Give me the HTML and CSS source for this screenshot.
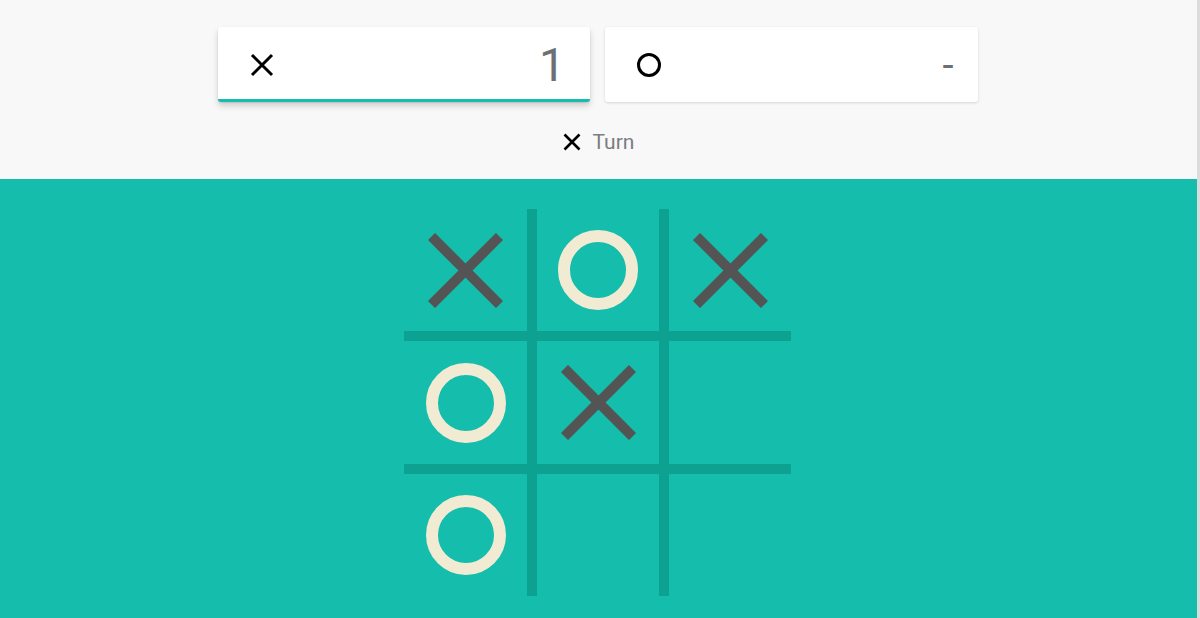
FILE: index.html
```html
<!DOCTYPE html>
<html lang="en">
<head>
<meta charset="utf-8">
<title>Tic Tac Toe</title>
<link rel="stylesheet" href="styles.css">
</head>
<body>
<div class="page">
  <header class="scoreboard">
    <div class="players">
      <div class="player player-active">
        <svg class="mark-icon" viewBox="0 0 24 24" width="24" height="24">
          <path d="M2 2 L22 22 M22 2 L2 22" stroke="#000" stroke-width="3" fill="none"/>
        </svg>
        <span class="score">1</span>
      </div>
      <div class="player">
        <svg class="mark-icon" viewBox="0 0 24 24" width="24" height="24">
          <circle cx="12" cy="12" r="10.5" stroke="#000" stroke-width="3" fill="none"/>
        </svg>
        <span class="score score-empty">-</span>
      </div>
    </div>
    <div class="turn">
      <svg class="turn-icon" viewBox="0 0 18 18" width="18" height="18">
        <path d="M1.5 1.5 L16.5 16.5 M16.5 1.5 L1.5 16.5" stroke="#000" stroke-width="2.6" fill="none"/>
      </svg>
      <span class="turn-label">Turn</span>
    </div>
  </header>

  <main class="arena">
    <div class="board">
      <div class="cell"><svg class="x" viewBox="0 0 75 75"><path d="M3.5 3.5 L71.5 71.5 M71.5 3.5 L3.5 71.5"/></svg></div>
      <div class="cell"><span class="o"></span></div>
      <div class="cell"><svg class="x" viewBox="0 0 75 75"><path d="M3.5 3.5 L71.5 71.5 M71.5 3.5 L3.5 71.5"/></svg></div>
      <div class="cell"><span class="o"></span></div>
      <div class="cell"><svg class="x" viewBox="0 0 75 75"><path d="M3.5 3.5 L71.5 71.5 M71.5 3.5 L3.5 71.5"/></svg></div>
      <div class="cell"></div>
      <div class="cell"><span class="o"></span></div>
      <div class="cell"></div>
      <div class="cell"></div>
    </div>
  </main>
</div>
</body>
</html>
```

FILE: styles.css
```css
* {
  box-sizing: border-box;
}

html, body {
  margin: 0;
  padding: 0;
  height: 100%;
  overflow: hidden;
}

body {
  font-family: Roboto, "Liberation Sans", Arial, sans-serif;
  background: #dcdcdc;
}

.page {
  width: 1197px;
  height: 100%;
  display: flex;
  flex-direction: column;
}

/* ---------- score header ---------- */
.scoreboard {
  height: 179px;
  background: #f8f8f8;
  padding-top: 27px;
  display: flex;
  flex-direction: column;
  align-items: center;
}

.players {
  display: flex;
  gap: 15px;
  margin-left: -2px;
}

.player {
  width: 372px;
  height: 75px;
  background: #fff;
  border-radius: 3px;
  box-shadow: 0 1px 3px rgba(0, 0, 0, 0.14);
  display: flex;
  align-items: center;
  justify-content: space-between;
  padding: 0 24px 0 32px;
}

.player + .player {
  width: 373px;
}

.player-active {
  border-bottom: 3px solid #14bdac;
  box-shadow: 0 4px 6px rgba(0, 0, 0, 0.16), 0 1px 2px rgba(0, 0, 0, 0.1);
  padding-top: 3px;
}

.mark-icon {
  display: block;
}

.score {
  font-size: 47px;
  font-weight: 400;
  color: #6c7075;
  line-height: 1;
}

.score-empty {
  font-size: 40px;
  padding-top: 2px;
}

.turn {
  margin-top: 30px;
  display: flex;
  align-items: center;
  gap: 12px;
  height: 20px;
}

.turn-icon {
  display: block;
}

.turn-label {
  font-size: 21px;
  color: #7a7d82;
  line-height: 20px;
}

/* ---------- board ---------- */
.arena {
  flex: 1;
  background: #14bdac;
  display: flex;
  justify-content: center;
  padding-top: 30px;
}

.board {
  display: grid;
  grid-template-columns: 123px 122px 122px;
  grid-template-rows: 122px 123px 122px;
  column-gap: 10px;
  row-gap: 10px;
  background: #0da192;
  width: 387px;
  height: 387px;
  margin-left: -2px;
}

.cell {
  background: #14bdac;
  display: flex;
  align-items: center;
  justify-content: center;
}

.x {
  width: 75px;
  height: 75px;
  display: block;
}

.x path {
  stroke: #545454;
  stroke-width: 10;
  fill: none;
}

.o {
  width: 80px;
  height: 80px;
  border-radius: 50%;
  border: 12px solid #f2ebd3;
  display: block;
}
```
